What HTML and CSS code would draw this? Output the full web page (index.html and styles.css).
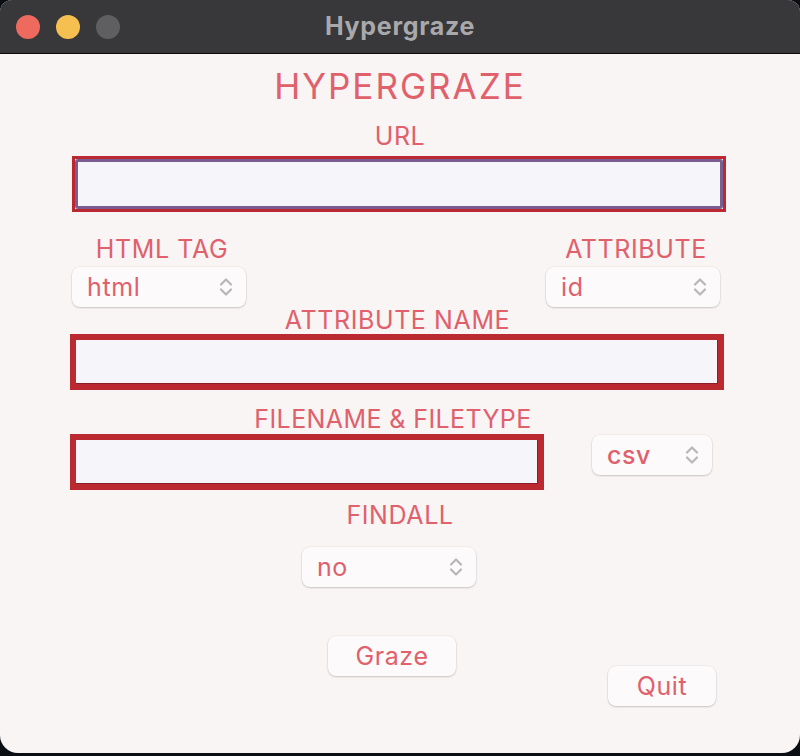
FILE: index.html
```html
<!DOCTYPE html>
<html>
<head>
<meta charset="utf-8">
<title>Hypergraze</title>
<link rel="stylesheet" href="styles.css">
</head>
<body>
<div class="window">
  <div class="titlebar">
    <div class="lights">
      <span class="light red"></span>
      <span class="light yellow"></span>
      <span class="light grey"></span>
    </div>
    <div class="title">Hypergraze</div>
  </div>
  <div class="content">
    <div class="heading">HYPERGRAZE</div>
    <div class="label label-url">URL</div>
    <div class="url-box"><div class="url-focus"></div></div>

    <div class="pair-labels">
      <div class="label">HTML TAG</div>
      <div class="label">ATTRIBUTE</div>
    </div>
    <div class="pair-selects">
      <div class="select"><span>html</span><svg class="chev" viewBox="0 0 14 20" width="14" height="20"><path d="M2 7.5 L7 2.5 L12 7.5 M2 12.5 L7 17.5 L12 12.5"/></svg></div>
      <div class="select"><span>id</span><svg class="chev" viewBox="0 0 14 20" width="14" height="20"><path d="M2 7.5 L7 2.5 L12 7.5 M2 12.5 L7 17.5 L12 12.5"/></svg></div>
    </div>

    <div class="label label-attrname">ATTRIBUTE NAME</div>
    <div class="entry entry-wide"></div>

    <div class="label label-file">FILENAME &amp; FILETYPE</div>
    <div class="file-row">
      <div class="entry entry-file"></div>
      <div class="select select-csv"><span class="csv">csv</span><svg class="chev" viewBox="0 0 14 20" width="14" height="20"><path d="M2 7.5 L7 2.5 L12 7.5 M2 12.5 L7 17.5 L12 12.5"/></svg></div>
    </div>

    <div class="label label-findall">FINDALL</div>
    <div class="select select-no"><span>no</span><svg class="chev" viewBox="0 0 14 20" width="14" height="20"><path d="M2 7.5 L7 2.5 L12 7.5 M2 12.5 L7 17.5 L12 12.5"/></svg></div>

    <div class="buttons">
      <div class="button button-graze">Graze</div>
      <div class="button button-quit">Quit</div>
    </div>
  </div>
</div>
</body>
</html>
```

FILE: styles.css
```css
html, body {
  margin: 0;
  padding: 0;
}
body {
  background: #0b0e13;
  width: 800px;
  height: 756px;
  overflow: hidden;
  font-family: Inter, "Liberation Sans", sans-serif;
}
.window {
  width: 800px;
  height: 753px;
  background: #f8f5f4;
  border-radius: 12px 12px 18px 18px;
  overflow: hidden;
  display: flex;
  flex-direction: column;
}
.titlebar {
  height: 53px;
  flex: none;
  background: #38383a;
  border-bottom: 1px solid #0a0a0a;
  display: flex;
  align-items: center;
  position: relative;
}
.lights {
  display: flex;
  gap: 16px;
  padding-left: 16px;
}
.light {
  width: 24px;
  height: 24px;
  border-radius: 50%;
  display: block;
}
.red { background: #ee6a5f; }
.yellow { background: #f5c04f; }
.grey { background: #5f5f61; }
.title {
  position: absolute;
  left: 0;
  right: 0;
  top: 0;
  line-height: 52px;
  text-align: center;
  color: #a9a9ab;
  font-weight: 700;
  font-size: 25px;
  letter-spacing: 0.7px;
}
.content {
  display: flex;
  flex-direction: column;
  color: #e0606c;
}
.heading {
  margin-top: 12px;
  font-size: 35px;
  line-height: 40px;
  text-align: center;
  letter-spacing: 2px;
}
.label {
  font-size: 25px;
  line-height: 24px;
  text-align: center;
  letter-spacing: 0.6px;
}
.label-url { margin-top: 18px; }
.url-box {
  margin-top: 8px;
  margin-left: 72px;
  width: 654px;
  height: 56px;
  box-sizing: border-box;
  border: 3px solid #bc2830;
  display: flex;
}
.url-focus {
  flex: 1;
  border: 3px solid #7b5e91;
  border-radius: 3px;
  background: #f6f5fa;
}
.pair-labels {
  margin-top: 25px;
  margin-left: 75px;
  width: 648px;
  display: grid;
  grid-template-columns: 174px 174px;
  justify-content: space-between;
}
.pair-selects {
  margin-top: 6px;
  margin-left: 72px;
  width: 648px;
  display: grid;
  grid-template-columns: 174px 174px;
  justify-content: space-between;
}
.select {
  height: 40px;
  box-sizing: border-box;
  background: #fcfafa;
  border-radius: 8px;
  box-shadow: 0 1px 2px rgba(0, 0, 0, 0.18), 0 0 0 0.5px rgba(0, 0, 0, 0.06);
  display: flex;
  align-items: center;
  justify-content: space-between;
  padding: 0 13px 0 15px;
  font-size: 25px;
  letter-spacing: 0.6px;
}
.chev {
  fill: none;
  stroke: #b8b6b6;
  stroke-width: 2.2;
  stroke-linecap: round;
  stroke-linejoin: round;
}
.label-attrname {
  margin-top: 1px;
  padding-right: 5px;
}
.entry {
  height: 56px;
  box-sizing: border-box;
  border: 6px solid #bc2a31;
  background: #f6f5fa;
  box-shadow: inset -1px -1px 0 #8e1d23;
}
.entry-wide {
  margin-top: 2px;
  margin-left: 70px;
  width: 654px;
}
.label-file {
  margin-top: 17px;
  padding-right: 14px;
  letter-spacing: 0.4px;
}
.file-row {
  margin-top: 3px;
  margin-left: 70px;
  display: flex;
  align-items: flex-start;
  gap: 48px;
}
.entry-file { width: 474px; }
.select-csv {
  width: 120px;
  margin-top: 1px;
}
.csv { font-weight: 500; }
.label-findall {
  margin-top: 13px;
}
.select-no {
  margin-top: 20px;
  margin-left: 302px;
  width: 174px;
}
.buttons {
  margin-top: 49px;
  margin-left: 328px;
  display: flex;
  align-items: flex-start;
  gap: 152px;
}
.button {
  height: 40px;
  background: #fcfafa;
  border-radius: 8px;
  box-shadow: 0 1px 2px rgba(0, 0, 0, 0.18), 0 0 0 0.5px rgba(0, 0, 0, 0.06);
  display: flex;
  align-items: center;
  justify-content: center;
  font-size: 25px;
  letter-spacing: 0.6px;
}
.button-graze { width: 128px; }
.button-quit {
  width: 108px;
  margin-top: 30px;
}
```
